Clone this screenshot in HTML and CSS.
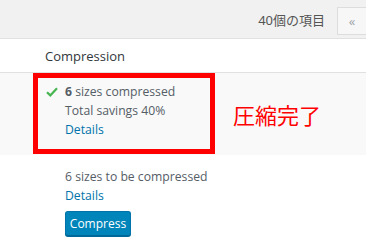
FILE: index.html
```html
<!DOCTYPE html>
<html lang="ja">
<head>
<meta charset="utf-8">
<link rel="stylesheet" href="styles.css">
</head>
<body>
<div class="top">
  <span class="count">40個の項目</span>
  <span class="pagebtn">«</span>
</div>
<div class="table">
  <div class="head">Compression</div>
  <div class="row done">
    <div class="mark">
      <div class="line"><svg class="check" width="12" height="10" viewBox="0 0 12 10"><path d="M1 5.2 L4.3 8.4 L11 1.2" fill="none" stroke="#46b450" stroke-width="2.2"/></svg><span><b>6</b> sizes compressed</span></div>
      <div class="line indent">Total savings 40%</div>
      <div class="line indent"><a href="#">Details</a></div>
    </div>
    <div class="note">圧縮完了</div>
  </div>
  <div class="row todo">
    <div class="line">6 sizes to be compressed</div>
    <div class="line"><a href="#">Details</a></div>
    <button class="compress">Compress</button>
  </div>
</div>
</body>
</html>
```
FILE: styles.css
```css
html, body {
  margin: 0;
  padding: 0;
}
body {
  width: 366px;
  height: 246px;
  overflow: hidden;
  display: flex;
  flex-direction: column;
  background: #f1f1f1;
  font-family: "Open Sans", "Noto Sans", "Noto Sans CJK JP", sans-serif;
  font-size: 12.2px;
  color: #555d66;
}
.top {
  height: 38px;
  flex: none;
  display: flex;
  justify-content: flex-end;
  align-items: center;
}
.count {
  font-family: "Noto Sans", "Noto Sans CJK JP", sans-serif;
  font-size: 13px;
  color: #555;
  margin-right: 12px;
}
.pagebtn {
  box-sizing: border-box;
  width: 29px;
  height: 28px;
  margin-top: 3px;
  border: 1px solid #ddd;
  border-right: none;
  background: #f7f7f7;
  color: #a0a5aa;
  font-size: 13px;
  display: flex;
  align-items: center;
  justify-content: center;
}
.table {
  flex: 1;
  min-height: 0;
  overflow: hidden;
  background: #fff;
  border-top: 1px solid #e1e1e1;
}
.head {
  height: 34px;
  box-sizing: border-box;
  padding-left: 45px;
  display: flex;
  align-items: center;
  font-size: 13px;
  color: #32373c;
  border-bottom: 1px solid #e1e1e1;
}
.row.done {
  background: #f9f9f9;
  height: 82px;
  display: flex;
  align-items: flex-start;
  padding-left: 33px;
}
.mark {
  box-sizing: border-box;
  width: 182px;
  height: 81px;
  border: 5px solid #ff0000;
  padding: 4px 0 0 8px;
}
.line {
  line-height: 19px;
  display: flex;
  align-items: center;
}
.indent {
  padding-left: 19px;
}
.check {
  margin-right: 7px;
}
b {
  font-weight: 700;
}
a {
  color: #0073aa;
  text-decoration: none;
}
.note {
  margin-left: 18px;
  margin-top: 26px;
  font-family: "Noto Sans CJK JP", sans-serif;
  font-size: 22px;
  line-height: 30px;
  color: #ff0000;
}
.row.todo {
  padding: 12px 0 0 65px;
}
.compress {
  display: block;
  margin-top: 6px;
  height: 25px;
  width: 66px;
  padding: 0;
  border: 1px solid #0073aa;
  border-bottom-color: #006799;
  border-radius: 3px;
  background: #0085ba;
  box-shadow: 0 1px 0 #006799;
  color: #fff;
  font-family: "Open Sans", "Noto Sans", sans-serif;
  font-size: 12px;
}
```
